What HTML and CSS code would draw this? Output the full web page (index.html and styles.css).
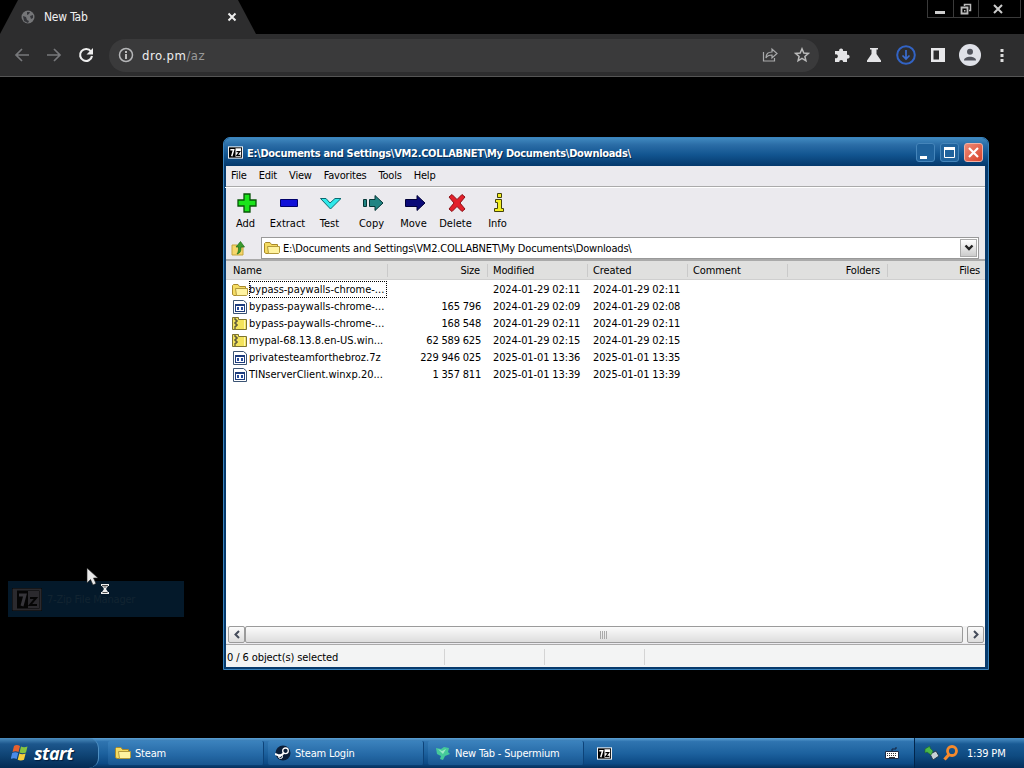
FILE: index.html
```
<!DOCTYPE html>
<html lang="en">
<head>
    <meta charset="UTF-8">
    <meta name="viewport" content="width=device-width, initial-scale=1.0">
    <title>New Tab</title>
    <link rel="stylesheet" href="styles.css">
</head>
<body>

    <!-- Shared icons -->
    <svg class="defs" width="0" height="0">
        <symbol id="folder" viewBox="0 0 16 16">
            <path d="M.5 3.500 L1.500 2.500 H6 L7.500 4.500 H13.500 V13.500 H2 L.5 12.500 Z" fill="#f5dc63" stroke="#a9892a"/>
            <path d="M3.500 6.500 H15.500 V12.500 L14.500 13.500 H4.500 Z" fill="#fff3a0" stroke="#b39a3c"/>
        </symbol>
        <symbol id="archive" viewBox="0 0 16 16">
            <path d="M.5 1.500 H6.500 V3.500 H14.500 V13.500 H.5 Z" fill="#f3e35c" stroke="#7d7330"/>
            <path d="M3 2v2h2v2H3v2h2v2H3v3" fill="none" stroke="#333"/>
            <path d="M12.500 4v9" stroke="#fff8b0"/>
        </symbol>
        <symbol id="file" viewBox="0 0 16 16">
            <path d="M1.500 1.500 H11.500 L14.500 4 V14.500 H1.500 Z" fill="#fff" stroke="#3c5474"/>
            <path d="M3 5h10v8H3z" fill="#1d3c7d"/>
            <path d="M4 7h8v5H4z" fill="#fff"/>
            <path d="M5 8h2v3H5zM9 8h2v3H9z" fill="#264a9a"/>
        </symbol>
        <symbol id="sevenzip" viewBox="0 0 16 13">
            <path d="M0 0h16v13H0z" fill="#fff"/>
            <path d="M1 1h14v11H1z" fill="#000"/>
            <path d="M8 2h6v9H8z" fill="#fff"/>
            <path d="M2.500 3.500H6L4 10.500" fill="none" stroke="#fff" stroke-width="1.600"/>
            <path d="M9 5.500h3.500l-3 4h3.700" fill="none" stroke="#000" stroke-width="1.300"/>
        </symbol>
    </svg>

    <div class="desktop">

        <div class="tabstrip">
            <div class="tab">
                <svg width="14" height="14" viewBox="0 0 14 14">
                    <circle cx="7" cy="7" r="6.500" fill="#757678"/>
                    <path d="M2 6l3 1 1 3 2 1-1 2-4-2zM6 2l3 0-1 2-2 1zM9 6l3-1v3l-2 1z" fill="#35363a"/>
                </svg>
                <span>New Tab</span>
                <svg class="tab-close" width="10" height="10" viewBox="0 0 10 10"><path d="M1.500 1.500l7 7M8.500 1.500l-7 7" stroke="#eee" stroke-width="2"/></svg>
            </div>
            <div class="window-controls">
                <span><svg width="12" height="12"><path d="M1 9.500h10" stroke="#ccc" stroke-width="3"/></svg></span>
                <span><svg width="12" height="12"><path d="M4.500 3V1.500h6v6H9" fill="none" stroke="#bbb" stroke-width="1.500"/><path d="M1.500 4.500h6v6h-6z" fill="none" stroke="#bbb" stroke-width="1.800"/><path d="M4 7h1.500v1.500H4z" fill="#bbb"/></svg></span>
                <span class="wide"><svg width="10" height="10"><path d="M1 1l8 8M9 1l-8 8" stroke="#ccc" stroke-width="2"/></svg></span>
            </div>
        </div>

        <div class="browser-bar">
            <svg class="nav" width="16" height="16" viewBox="0 0 16 16"><path d="M15 8H2M8 2L2 8l6 6" fill="none" stroke="#77787b" stroke-width="1.700"/></svg>
            <svg class="nav" width="16" height="16" viewBox="0 0 16 16"><path d="M1 8h13M8 2l6 6-6 6" fill="none" stroke="#77787b" stroke-width="1.700"/></svg>
            <svg class="nav" width="16" height="16" viewBox="0 0 16 16"><path d="M13 4.500A6 6 0 1 0 14 9" fill="none" stroke="#eee" stroke-width="2.100"/><path d="M15 1v6.500H8.500z" fill="#eee"/></svg>
            <div class="omnibox">
                <svg width="16" height="16" viewBox="0 0 16 16"><circle cx="8" cy="8" r="6.500" fill="none" stroke="#b5b6b8" stroke-width="1.500"/><path d="M8 4v2M8 7v5" stroke="#ccc" stroke-width="1.800"/></svg>
                <span class="url">dro.pm<i>/az</i></span>
                <svg class="share" width="16" height="16" viewBox="0 0 16 16"><path d="M1.500 5v9h11v-3M4 11c0-4 2-6 6-6V2l5 4.500-5 4.500V8c-3 0-5 1-6 3z" fill="none" stroke="#a9aaac" stroke-width="1.200"/></svg>
                <svg width="16" height="16" viewBox="0 0 16 16"><path d="M8 1.800l1.800 4.200 4.500.4-3.400 3 1 4.400L8 11.400l-3.900 2.400 1-4.400-3.400-3 4.500-.4z" fill="none" stroke="#bbb" stroke-width="1.500"/></svg>
            </div>
            <div class="extensions">
                <span><svg width="16" height="16" viewBox="0 0 16 16"><path d="M1 4h4.200a2 2 0 1 1 3.800 0H13v3.800a2 2 0 1 1 0 3.800V15H9.200a2 2 0 1 0-4 0H1v-4a2 2 0 1 0 0-3.600z" fill="#e4e4e6"/></svg></span>
                <span><svg width="16" height="16" viewBox="0 0 16 16"><path d="M4 1h8v1.500h-1.500V7L15 13.500V15H1v-1.500L5.500 7V2.500H4z" fill="#e4e4e6"/></svg></span>
                <span><svg width="20" height="20" viewBox="0 0 20 20"><circle cx="10" cy="10" r="8.800" fill="none" stroke="#3263c4" stroke-width="2"/><path d="M10 5v9M6.500 10.500L10 14l3.500-3.500" fill="none" stroke="#3a6dd0" stroke-width="1.700"/></svg></span>
                <span><svg width="16" height="16" viewBox="0 0 16 16"><path d="M1 1h14v14H1zM3.500 3.500v9H9v-9z" fill="#e8e8ea" fill-rule="evenodd"/></svg></span>
                <span><svg width="22" height="22" viewBox="0 0 22 22"><circle cx="11" cy="11" r="11" fill="#dfe1e8"/><circle cx="11" cy="7.800" r="3" fill="#50535c"/><path d="M5 16.500c0-5 12-5 12 0z" fill="#50535c"/></svg></span>
                <span><svg width="4" height="16" viewBox="0 0 4 16"><path d="M.5 2h3v3h-3zM.5 7h3v3h-3zM.5 12h3v3h-3z" fill="#ddd"/></svg></span>
            </div>
        </div>

        <!-- 7-Zip file manager -->
        <div class="window">
            <div class="titlebar">
                <svg width="15" height="13"><use href="#sevenzip"/></svg>
                <h1>E:\Documents and Settings\VM2.COLLABNET\My Documents\Downloads\</h1>
                <div class="caption-buttons">
                    <span><svg width="17" height="17"><path d="M3 12h7v3H3z" fill="#fff"/></svg></span>
                    <span><svg width="17" height="17"><path d="M3.500 4.500h10v9h-10z" fill="none" stroke="#fff"/><path d="M3 3h11v3H3z" fill="#fff"/></svg></span>
                    <span class="close"><svg width="17" height="17"><path d="M4 4l9 9M13 4l-9 9" stroke="#fff" stroke-width="2.200"/></svg></span>
                </div>
            </div>
            <div class="client">
                <div class="menubar">
                    <span>File</span><span>Edit</span><span>View</span><span>Favorites</span><span>Tools</span><span>Help</span>
                </div>

                <div class="toolbar">
                    <div class="tool">
                        <svg width="22" height="22" viewBox="0 0 22 22"><path d="M9 2h6v6h6v6h-6v6H9v-6H3V8h6z" fill="#1be41b" stroke="#075507" stroke-width="1.300"/></svg>
                        <span>Add</span>
                    </div>
                    <div class="tool">
                        <svg width="22" height="22" viewBox="0 0 22 22"><path d="M3.500 7.500h17v7h-17z" fill="#1010d8" stroke="#00006a"/></svg>
                        <span>Extract</span>
                    </div>
                    <div class="tool">
                        <svg width="22" height="22" viewBox="0 0 22 22"><path d="M1.500 6.500H7l4 4.500 5-4.500h6L11.500 17z" fill="#2fe9ea" stroke="#0c6a70"/></svg>
                        <span>Test</span>
                    </div>
                    <div class="tool">
                        <svg width="22" height="22" viewBox="0 0 22 22"><path d="M2.500 7.500h3v7h-3zM8.500 7.500H14V3.500l8 7.500-8 7.500v-4H8.500z" fill="#218584" stroke="#063736"/></svg>
                        <span>Copy</span>
                    </div>
                    <div class="tool">
                        <svg width="22" height="22" viewBox="0 0 22 22"><path d="M2.500 7.500H14v-4l8 7.500-8 7.500v-4H2.500z" fill="#0a0a78" stroke="#000038"/></svg>
                        <span>Move</span>
                    </div>
                    <div class="tool">
                        <svg width="22" height="22" viewBox="0 0 22 22"><path d="M4 5l3-2.500 5 5 5-5L20 5l-5 6 5 6-3 2.500-5-5-5 5L4 17l5-6z" fill="#e3202a" stroke="#8c1016"/></svg>
                        <span>Delete</span>
                    </div>
                    <div class="tool">
                        <svg width="22" height="22" viewBox="0 0 22 22"><path d="M10.500 1.500h4v4h-4zM8.500 7.500h6v9h2v3h-9v-3h3v-6h-2z" fill="#f2ee22" stroke="#44420a"/></svg>
                        <span>Info</span>
                    </div>
                </div>

                <div class="address">
                    <svg class="up" width="16" height="16" viewBox="0 0 16 16"><path d="M1 5h5l1 2h5v8H1z" fill="#f6d66a" stroke="#c5a53a"/><path d="M6 14c4-1 4-4 4-7H13.500L9.500 1.500 5 7h2.500c0 3 0 5-1.500 7z" fill="#399b2d" stroke="#1e6c1b" stroke-width=".7"/></svg>
                    <div class="combo">
                        <svg width="16" height="16"><use href="#folder"/></svg>
                        <span>E:\Documents and Settings\VM2.COLLABNET\My Documents\Downloads\</span>
                        <b><svg width="10" height="8"><path d="M1.500 1.500L5 5l3.500-3.500" fill="none" stroke="#222" stroke-width="2.400"/></svg></b>
                    </div>
                </div>

                <div class="list">
                    <div class="row head"><span>Name</span><span class="num">Size</span><span>Modified</span><span>Created</span><span>Comment</span><span class="num">Folders</span><span class="num">Files</span></div>
                    <div class="row"><span class="name"><svg width="16" height="16"><use href="#folder"/></svg><em class="focused">bypass-paywalls-chrome-...</em></span><span class="num"></span><span>2024-01-29 02:11</span><span>2024-01-29 02:11</span></div>
                    <div class="row"><span class="name"><svg width="16" height="16"><use href="#file"/></svg><em>bypass-paywalls-chrome-...</em></span><span class="num">165 796</span><span>2024-01-29 02:09</span><span>2024-01-29 02:08</span></div>
                    <div class="row"><span class="name"><svg width="16" height="16"><use href="#archive"/></svg><em>bypass-paywalls-chrome-...</em></span><span class="num">168 548</span><span>2024-01-29 02:11</span><span>2024-01-29 02:11</span></div>
                    <div class="row"><span class="name"><svg width="16" height="16"><use href="#archive"/></svg><em>mypal-68.13.8.en-US.win...</em></span><span class="num">62 589 625</span><span>2024-01-29 02:15</span><span>2024-01-29 02:15</span></div>
                    <div class="row"><span class="name"><svg width="16" height="16"><use href="#file"/></svg><em>privatesteamforthebroz.7z</em></span><span class="num">229 946 025</span><span>2025-01-01 13:36</span><span>2025-01-01 13:35</span></div>
                    <div class="row"><span class="name"><svg width="16" height="16"><use href="#file"/></svg><em>TINserverClient.winxp.20...</em></span><span class="num">1 357 811</span><span>2025-01-01 13:39</span><span>2025-01-01 13:39</span></div>
                </div>

                <div class="scrollbar">
                    <span class="arrow"><svg width="8" height="9"><path d="M6 1L2.500 4.500 6 8" fill="none" stroke="#444b5a" stroke-width="2"/></svg></span>
                    <span class="thumb"><svg width="8" height="8"><path d="M.5 0v8M2.500 0v8M4.500 0v8M6.500 0v8" stroke="#aaa"/></svg></span>
                    <span class="arrow"><svg width="8" height="9"><path d="M2 1l3.500 3.500L2 8" fill="none" stroke="#444b5a" stroke-width="2"/></svg></span>
                </div>

                <div class="statusbar"><span class="count">0 / 6 object(s) selected</span><span></span><span></span></div>
            </div>
        </div>

        <!-- Fading start menu item -->
        <div class="ghost">
            <svg width="30" height="23" viewBox="0 0 30 23"><path d="M0 0h30v23H0z" fill="#050505"/><path d="M1.500 1.500h27v20h-27z" fill="#050505" stroke="#2b2a2e" stroke-width="2"/><path d="M2 2h3v19H2zM16 3h11v17H16z" fill="#2b2a2e"/><path d="M7 7h6L10 18" fill="none" stroke="#36353a" stroke-width="3"/><path d="M18 10h6l-6 7h7" fill="none" stroke="#050505" stroke-width="2"/></svg>
            <span>7-Zip File Manager</span>
        </div>
        <svg class="cursor" width="26" height="30" viewBox="0 0 26 30">
            <path d="M1 1v15l3.500-3.500L7 18l3-1.500L7.500 11H12z" fill="#e8e8e8" stroke="#222" stroke-width=".6"/>
            <path d="M15 17h8v2h-1l-2 3 2 3h1v2h-8v-2h1l2-3-2-3h-1z" fill="#eee"/>
            <path d="M16 18.500h6M17.500 20h3M16.500 25.500h5" stroke="#222" stroke-width=".8"/>
        </svg>

        <div class="taskbar">
            <div class="start">
                <svg width="18" height="18" viewBox="0 0 18 18">
                    <path d="M3 2c2-1.500 4-1 6 0L7.500 8c-2-1-4-1-6 0z" fill="#e8602c"/>
                    <path d="M10 2.500c2 1 4 1 6.500 0L15 8.500c-2 1-4.500 1-6.500 0z" fill="#86c440"/>
                    <path d="M1.200 9c2-1 4-1 6 0L5.700 15c-2-1-4-1-6 0z" fill="#4a8be8"/>
                    <path d="M8.300 9.600c2 1 4 1 6.300 0L13 15.700c-2 1-4.500 1-6.300 0z" fill="#f8cf3c"/>
                </svg>
                <span>start</span>
            </div>
            <div class="task"><svg width="16" height="16"><use href="#folder"/></svg><span>Steam</span></div>
            <div class="task"><svg width="16" height="16" viewBox="0 0 16 16"><circle cx="8" cy="8" r="7.500" fill="#0b1e38"/><circle cx="10.500" cy="5.800" r="2.800" fill="none" stroke="#fff" stroke-width="1.300"/><path d="M0 9l5 2 4-3" fill="none" stroke="#fff" stroke-width="2"/><circle cx="5.500" cy="11.500" r="2" fill="none" stroke="#fff"/></svg><span>Steam Login</span></div>
            <div class="task"><svg width="16" height="16" viewBox="0 0 16 16"><path d="M1 3l5 1 3-2 5 1-1 4 2 2-5 2-2 4-3-1 1-3-4-2z" fill="#45c99a"/><path d="M3 4l4 2 4-2-3 5z" fill="#9aeac7"/></svg><span>New Tab - Supermium</span></div>
            <div class="task bare"><svg width="15" height="13"><use href="#sevenzip"/></svg></div>
            <svg class="keyboard" width="14" height="12" viewBox="0 0 14 12"><path d="M7 4V2h4V0" fill="none" stroke="#14233c"/><path d="M.5 4.500h13v7H.5z" fill="#fff" stroke="#1c2c48"/><path d="M2 6.500h10M2 8.500h10" stroke="#333" stroke-dasharray="1 1"/><path d="M4 10.500h6" stroke="#333"/></svg>
            <div class="tray">
                <svg width="16" height="16" viewBox="0 0 16 16"><path d="M6 9l6-3 3 5-6 4z" fill="#c9d0d4" stroke="#24384c"/><path d="M1 4l5-3v2l3 3-2 4-4-3-2 1z" fill="#4cb848" stroke="#1d6a2b" stroke-width=".6"/></svg>
                <svg width="16" height="16" viewBox="0 0 16 16"><circle cx="9" cy="6" r="4.500" fill="none" stroke="#f58a2c" stroke-width="2.800"/><path d="M6 9.500L1.500 14.500" stroke="#f58a2c" stroke-width="3.200"/></svg>
                <span>1:39 PM</span>
            </div>
        </div>
    </div>

</body>
</html>
```
FILE: styles.css
```
* {
    box-sizing: border-box;
}

body {
    margin: 0;
    background: #000;
    font-family: 'DejaVu Sans Condensed', 'DejaVu Sans', sans-serif;
    font-stretch: condensed;
    font-size: 11px;
    letter-spacing: -0.2px;
    color: #000;
}

svg {
    display: block;
    flex: none;
}

.defs {
    position: absolute;
}

.desktop {
    position: relative;
    width: 1024px;
    height: 768px;
    overflow: hidden;
    display: flex;
    flex-direction: column;
    white-space: nowrap;
}

/* Browser */
.tabstrip {
    height: 34px;
    display: flex;
    justify-content: space-between;
    align-items: flex-start;
}

.tab {
    width: 256px;
    height: 34px;
    padding: 0 19px 0 21px;
    display: flex;
    align-items: center;
    gap: 9px;
    background: #2d2d2e;
    color: #f1f1f1;
    font-size: 12px;
    clip-path: polygon(18px 0, 238px 0, 256px 100%, 0 100%);
}

.tab-close {
    margin-left: auto;
}

.window-controls {
    display: flex;
    height: 18px;
    margin-right: 3px;
    border: 1px solid #3a3a3a;
    border-top: none;
}

.window-controls span {
    width: 25px;
    padding-right: 1px;
    display: flex;
    align-items: center;
    justify-content: center;
}

.window-controls span + span {
    border-left: 1px solid #3a3a3a;
}

.window-controls .wide {
    width: 42px;
    padding-right: 4px;
}

.browser-bar {
    height: 43px;
    flex: none;
    padding-left: 14px;
    display: flex;
    align-items: center;
    background: #2d2d2e;
    border-bottom: 1px solid #555;
}

.nav {
    margin-right: 16px;
}

.omnibox {
    width: 710px;
    height: 33px;
    margin-left: -1px;
    padding: 0 9px;
    display: flex;
    align-items: center;
    border-radius: 17px;
    background: #3a3a3b;
}

.url {
    margin-left: 8px;
    color: #eee;
    font-size: 13px;
    letter-spacing: 0.5px;
}

.url i {
    font-style: normal;
    color: #999;
}

.share {
    margin-left: auto;
    margin-right: 16px;
}

.extensions {
    padding-left: 7px;
    display: flex;
    align-items: center;
}

.extensions span {
    width: 32px;
    display: flex;
    justify-content: center;
}

/* File manager window */
.window {
    position: absolute;
    left: 223px;
    top: 137px;
    width: 766px;
    height: 533px;
    padding: 0 3px 2px 2px;
    display: flex;
    flex-direction: column;
    background: #073a6c;
    border: 1px solid #3983bd;
    border-radius: 7px 7px 0 0;
}

.titlebar {
    height: 28px;
    margin: 0 -3px 0 -2px;
    padding: 1px 5px 0 4px;
    display: flex;
    align-items: center;
    background: linear-gradient(#4089bf, #2a6ca6 25%, #125590 60%, #04396c);
    border-radius: 6px 6px 0 0;
}

.titlebar h1 {
    margin: 1px 0 0 4px;
    color: #fff;
    font-size: 11px;
    font-weight: bold;
    letter-spacing: -0.3px;
    text-shadow: 1px 1px #03294e;
}

.caption-buttons {
    margin-left: auto;
    display: flex;
    gap: 5px;
}

.caption-buttons span {
    width: 19px;
    height: 19px;
    border: 1px solid #4585ba;
    border-radius: 3px;
    background: #1f629c;
}

.caption-buttons .close {
    border-color: #f0b0a4;
    background: linear-gradient(135deg, #ee8a76, #d8432b);
}

.client {
    flex: 1;
    display: flex;
    flex-direction: column;
    background: #ebeaee;
}

.menubar {
    height: 21px;
    padding: 0 0 2px 5px;
    display: flex;
    align-items: center;
    border-bottom: 1px solid #aaa;
}

.menubar span {
    margin-right: 12px;
}

.toolbar {
    height: 49px;
    margin-left: -1px;
    display: flex;
    border-top: 1px solid #fff;
}

.tool {
    width: 42px;
    padding-top: 4px;
    display: flex;
    flex-direction: column;
    align-items: center;
}

.tool span {
    margin-top: 3px;
    margin-right: 1px;
    letter-spacing: 0;
}

.address {
    height: 23px;
    display: flex;
    align-items: center;
    padding: 0 6px 0 5px;
}

.combo {
    flex: 1;
    height: 22px;
    margin-left: 14px;
    padding: 1px 1px 1px 2px;
    display: flex;
    align-items: center;
    gap: 3px;
    background: #fff;
    border: 1px solid #999;
}

.combo span {
    padding-top: 1px;
    letter-spacing: -0.19px;
}

.combo b {
    width: 17px;
    height: 18px;
    margin-left: auto;
    display: flex;
    align-items: center;
    justify-content: center;
    border: 1px solid #aaa;
    background: linear-gradient(#fff, #ccc);
}

.list {
    flex: 1;
    border-top: 2px solid #aaa;
    background: #fff;
    overflow: hidden;
}

.row {
    height: 17px;
    display: grid;
    grid-template-columns: 162px repeat(6, 100px);
    align-items: center;
    letter-spacing: -0.12px;
}

.row > span {
    padding-left: 5px;
}

.row .num {
    padding-right: 7px;
    text-align: right;
    letter-spacing: -0.2px;
}

.head {
    height: 19px;
    margin-bottom: 1px;
    background: #e0e0df;
    border-bottom: 1px solid #cfcfcf;
}

.head span {
    border-right: 1px solid #cacaca;
    padding-right: 6px;
}

.head > span:first-child {
    padding-left: 7px;
}

.row .name {
    display: flex;
    align-items: center;
    gap: 1px;
    padding-left: 6px;
    padding-right: 1px;
    letter-spacing: 0;
}

em {
    font-style: normal;
    height: 17px;
    line-height: 17px;
}

.focused {
    flex: 1;
    outline: 1px dotted #000;
    outline-offset: -1px;
}

.scrollbar {
    height: 17px;
    padding: 0 1px 0 2px;
    display: flex;
    background: #f3f3f3;
}

.scrollbar span {
    display: flex;
    align-items: center;
    justify-content: center;
    border: 1px solid #9b9b9b;
    border-radius: 2px;
    background: linear-gradient(#fbfbfb, #ddd);
}

.scrollbar .arrow {
    width: 17px;
}

.scrollbar .thumb {
    flex: 1;
    margin-right: 4px;
}

.statusbar {
    height: 23px;
    margin-top: 1px;
    padding: 4px 0 2px 1px;
    display: flex;
    background: #f3f4f4;
    border-top: 1px solid #aaa;
}

.statusbar span {
    width: 100px;
    border-right: 1px solid #d4d4d4;
    line-height: 17px;
}

.statusbar .count {
    width: 218px;
    letter-spacing: -0.1px;
}

/* Start menu item and pointer */
.ghost {
    position: absolute;
    left: 8px;
    top: 581px;
    width: 176px;
    height: 36px;
    padding-left: 4px;
    display: flex;
    align-items: center;
    gap: 5px;
    background: #04192a;
    color: #122431;
}

.cursor {
    position: absolute;
    left: 86px;
    top: 567px;
}

/* Taskbar */
.taskbar {
    height: 30px;
    margin-top: auto;
    display: flex;
    align-items: center;
    background: linear-gradient(#5da0d2, #2f74b0 12%, #1d629f 50%, #0c4a85 85%, #05305c);
    color: #fff;
}

.start {
    width: 99px;
    height: 30px;
    padding-left: 11px;
    display: flex;
    align-items: center;
    gap: 5px;
    background: linear-gradient(#4c8dbe, #1c568c 20%, #0e4272 60%, #032b54);
    border-radius: 0 10px 10px 0;
    border-right: 1px solid #4e8fc2;
}

.start span {
    font: italic bold 18px 'Open Sans', sans-serif;
    letter-spacing: -0.5px;
    text-shadow: 1px 1px 1px #001c3c;
}

.task {
    width: 156px;
    height: 24px;
    margin-left: 4px;
    padding-left: 7px;
    display: flex;
    align-items: center;
    gap: 4px;
    border-radius: 2px;
    background: linear-gradient(#3b82bd, #2468a5 60%, #18568f);
    border-right: 1px solid #0d4379;
}

.start + .task {
    margin-left: 9px;
}

.bare {
    width: 40px;
    margin-left: 6px;
    background: none;
    border: none;
}

.keyboard {
    margin-left: auto;
    margin-right: 15px;
}

.tray {
    width: 110px;
    height: 30px;
    padding-left: 9px;
    display: flex;
    align-items: center;
    gap: 3px;
    border-left: 1px solid #02264c;
    background: linear-gradient(#4b8fc4, #195a94 20%, #0e4a80 60%, #032e5b);
}

.tray span {
    margin-left: 5px;
}
```
